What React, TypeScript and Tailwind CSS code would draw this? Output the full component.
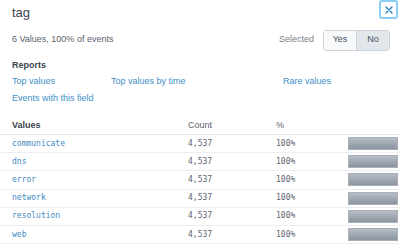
import React from "react";

const rows = ["communicate", "dns", "error", "network", "resolution", "web"];

const App = () => {
  return (
    <div className="w-[400px] h-[246px] bg-white overflow-hidden relative font-['Liberation_Sans',Arial,sans-serif] text-[#5c6370]">
      {/* close */}
      <button className="absolute right-[2px] top-0 w-[19px] h-[19px] rounded-[3px] border-2 border-[#8ccdf5] flex items-center justify-center text-[#1f7fc1]">
        <svg width="8" height="8" viewBox="0 0 8 8">
          <path d="M1 1 L7 7 M7 1 L1 7" stroke="currentColor" strokeWidth="1.3" strokeLinecap="round" />
        </svg>
      </button>

      <div className="pl-[12px]">
        <div className="h-[26px] flex items-center text-[13px] text-[#3c444d]">tag</div>

        <div className="mt-[3px] h-[22px] flex items-center justify-between pr-[10px]">
          <p className="text-[9px] text-[#5c6370]">6 Values, 100% of events</p>
          <div className="flex items-center">
            <span className="text-[9px] text-[#7a818a] mr-[9px]">Selected</span>
            <div className="flex h-[21px] rounded-[3px] border border-[#cdd3da] overflow-hidden text-[9px] text-[#4a525c]">
              <div className="w-[33px] flex items-center justify-center bg-[#f8f9fa] border-r border-[#cdd3da]">Yes</div>
              <div className="w-[32px] flex items-center justify-center bg-[#e1e6eb]">No</div>
            </div>
          </div>
        </div>

        <p className="mt-[8px] h-[14px] flex items-center text-[9px] font-bold text-[#3c444d]">Reports</p>
        <div className="flex h-[17px] items-center text-[9px] text-[#3d8fc6]">
          <span className="w-[99px]">Top values</span>
          <span className="w-[172px]">Top values by time</span>
          <span>Rare values</span>
        </div>
        <div className="flex h-[17px] items-center text-[9px] text-[#3d8fc6]">Events with this field</div>
      </div>

      <div className="mt-[10px]">
        <div className="h-[18px] flex items-center border-b border-[#e3e6ea] pl-[12px] text-[9px]">
          <span className="w-[176px] font-bold text-[#3c444d]">Values</span>
          <span className="w-[88px] text-[#5c6370]">Count</span>
          <span className="text-[#5c6370]">%</span>
        </div>
        {rows.map((r) => (
          <div key={r} className="h-[18.2px] flex items-center border-b border-[#eceef1] pl-[12px] font-['DejaVu_Sans_Mono',monospace] text-[8px]">
            <span className="w-[176px] text-[#3f8bc2]">{r}</span>
            <span className="w-[88px] text-[#5c6370]">4,537</span>
            <span className="w-[72px] text-[#5c6370]">100%</span>
            <div className="w-[50px] h-[13px] bg-gradient-to-b from-[#b6bdc6] to-[#8b949f] border border-[#a9b0b9]" />
          </div>
        ))}
      </div>
    </div>
  );
};

export default App;
